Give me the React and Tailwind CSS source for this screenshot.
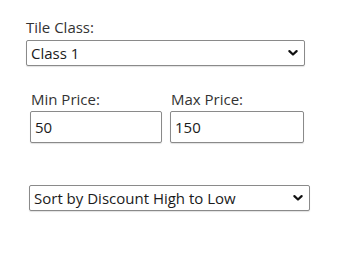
import { useState } from 'react'

const Chevron = () => (
  <svg
    className="pointer-events-none absolute right-[7px] top-1/2 -translate-y-1/2"
    width="10"
    height="7"
    viewBox="0 0 10 7"
    fill="none"
  >
    <path d="M1.4 1.6 L5 5 L8.6 1.6" stroke="#111" strokeWidth="2.2" strokeLinecap="round" strokeLinejoin="round" />
  </svg>
)

const Select = ({ value, options, className = '', onChange }) => (
  <div className={`relative ${className}`}>
    <select
      value={value}
      onChange={(e) => onChange(e.target.value)}
      className="h-full w-full appearance-none rounded-[2px] border border-[#8a8a8a] bg-white pl-[4px] pr-6 text-[15px] text-[#1b1b1b] shadow-[0_1px_1px_rgba(0,0,0,0.12)] outline-none"
    >
      {options.map((o) => (
        <option key={o} value={o}>
          {o}
        </option>
      ))}
    </select>
    <Chevron />
  </div>
)

const PriceField = ({ label, value, onChange, className = '' }) => (
  <div className={`flex flex-col ${className}`}>
    <label className="pl-[1px] text-[15px] leading-[20px] text-[#333]">{label}</label>
    <input
      value={value}
      onChange={(e) => onChange(e.target.value)}
      className="mt-[2px] h-[32px] w-full rounded-[2px] border border-[#8a8a8a] bg-white pl-[4px] text-[15px] text-[#1b1b1b] shadow-[0_1px_1px_rgba(0,0,0,0.12)] outline-none"
    />
  </div>
)

export default function App() {
  const [tileClass, setTileClass] = useState('Class 1')
  const [min, setMin] = useState('50')
  const [max, setMax] = useState('150')
  const [sort, setSort] = useState('Sort by Discount High to Low')

  return (
    <div className="h-[264px] w-[341px] bg-white pt-[17px] font-['Open_Sans','Noto_Sans',sans-serif]">
      <div className="ml-[26px] w-[279px]">
        <label className="block text-[15px] leading-[20px] text-[#333]">Tile Class:</label>
        <Select
          className="mt-[3px] h-[26px]"
          value={tileClass}
          onChange={setTileClass}
          options={['Class 1', 'Class 2', 'Class 3']}
        />
      </div>

      <div className="ml-[30px] mt-[23px] flex w-[274px] gap-[8px]">
        <PriceField className="w-[132px]" label="Min Price:" value={min} onChange={setMin} />
        <PriceField className="w-[134px]" label="Max Price:" value={max} onChange={setMax} />
      </div>

      <div className="ml-[29px] mt-[42px] w-[281px]">
        <Select
          className="h-[26px]"
          value={sort}
          onChange={setSort}
          options={[
            'Sort by Discount High to Low',
            'Sort by Discount Low to High',
            'Sort by Price High to Low',
            'Sort by Price Low to High',
          ]}
        />
      </div>
    </div>
  )
}
